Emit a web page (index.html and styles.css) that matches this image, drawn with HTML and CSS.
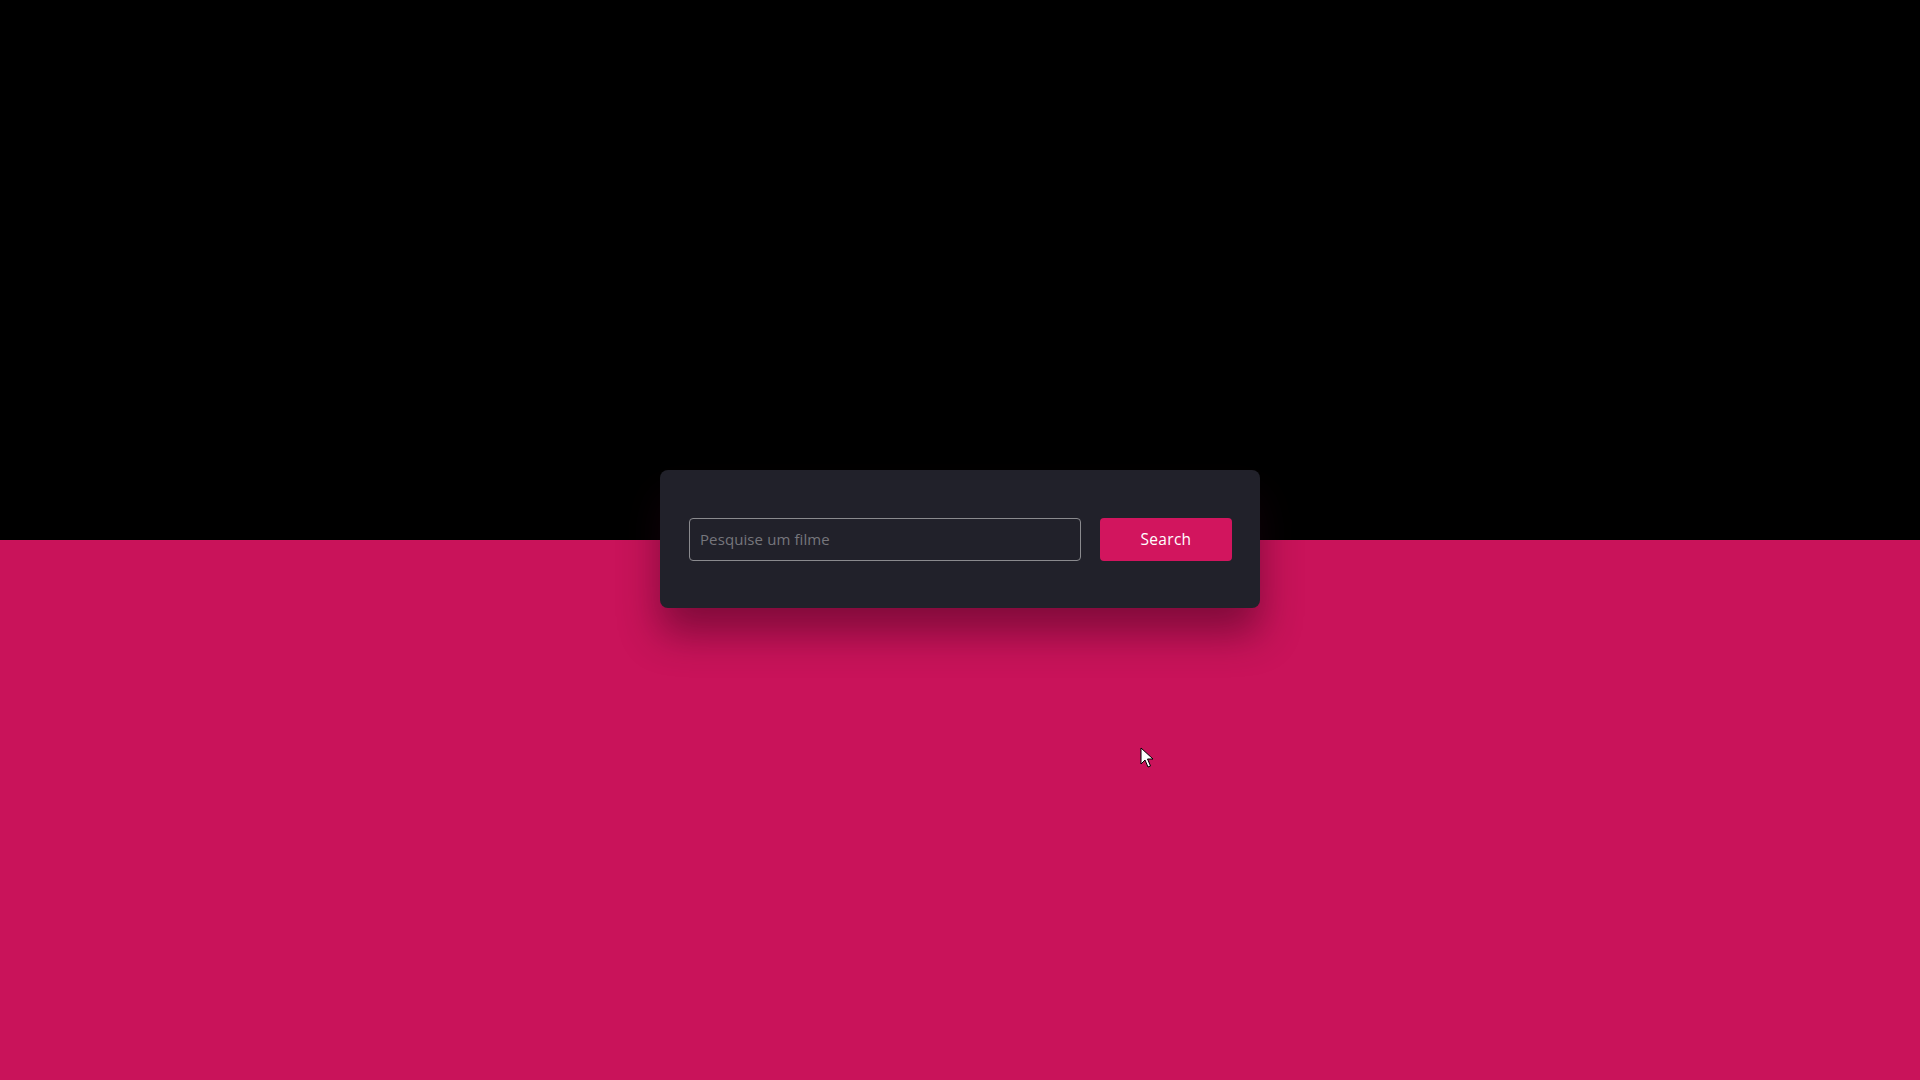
FILE: index.html
```html
<!DOCTYPE html>
<html lang="pt">
<head>
<meta charset="utf-8">
<title>Pesquise um filme</title>
<link rel="stylesheet" href="styles.css">
</head>
<body>
<header class="top"></header>
<main class="bottom">
  <form class="search-card">
    <input class="search-input" type="text" placeholder="Pesquise um filme">
    <button class="search-btn" type="button">Search</button>
  </form>
  <svg class="cursor" width="14" height="22" viewBox="0 0 14 22"><path d="M1 1 L1 17 L5 13 L8 20 L10.5 19 L7.5 12 L13 12 Z" fill="#fff" stroke="#000" stroke-width="1"/></svg>
</main>
</body>
</html>
```
FILE: styles.css
```css
* { box-sizing: border-box; }
html, body { margin: 0; height: 100%; }
body {
  font-family: "Open Sans", "Noto Sans", sans-serif;
  background: #c9135a;
  overflow: hidden;
}
.top {
  height: 540px;
  background: #000;
}
.bottom {
  position: relative;
  height: 540px;
  background: #c9135a;
}
.search-card {
  position: absolute;
  left: 660px;
  top: -70px;
  width: 600px;
  height: 138px;
  padding: 48px 28px 0 29px;
  display: flex;
  gap: 19px;
  background: #21212a;
  border-radius: 8px;
  box-shadow: 0 25px 40px rgba(40, 0, 20, 0.45);
}
.search-input {
  width: 392px;
  height: 43px;
  padding: 0 10px 2px;
  background: transparent;
  border: 1px solid #8a8a8e;
  border-radius: 4px;
  font-family: inherit;
  font-size: 15px;
  letter-spacing: 0.1px;
  color: #ddd;
  outline: none;
}
.search-input::placeholder { color: #76767c; }
.search-btn {
  width: 132px;
  height: 43px;
  padding: 0 0 2px;
  border: none;
  border-radius: 4px;
  background: #d2155e;
  color: #fff;
  font-family: inherit;
  font-size: 15.5px;
  font-weight: 500;
  letter-spacing: 0.3px;
}
.cursor {
  position: absolute;
  left: 1140px;
  top: 207px;
}
```
